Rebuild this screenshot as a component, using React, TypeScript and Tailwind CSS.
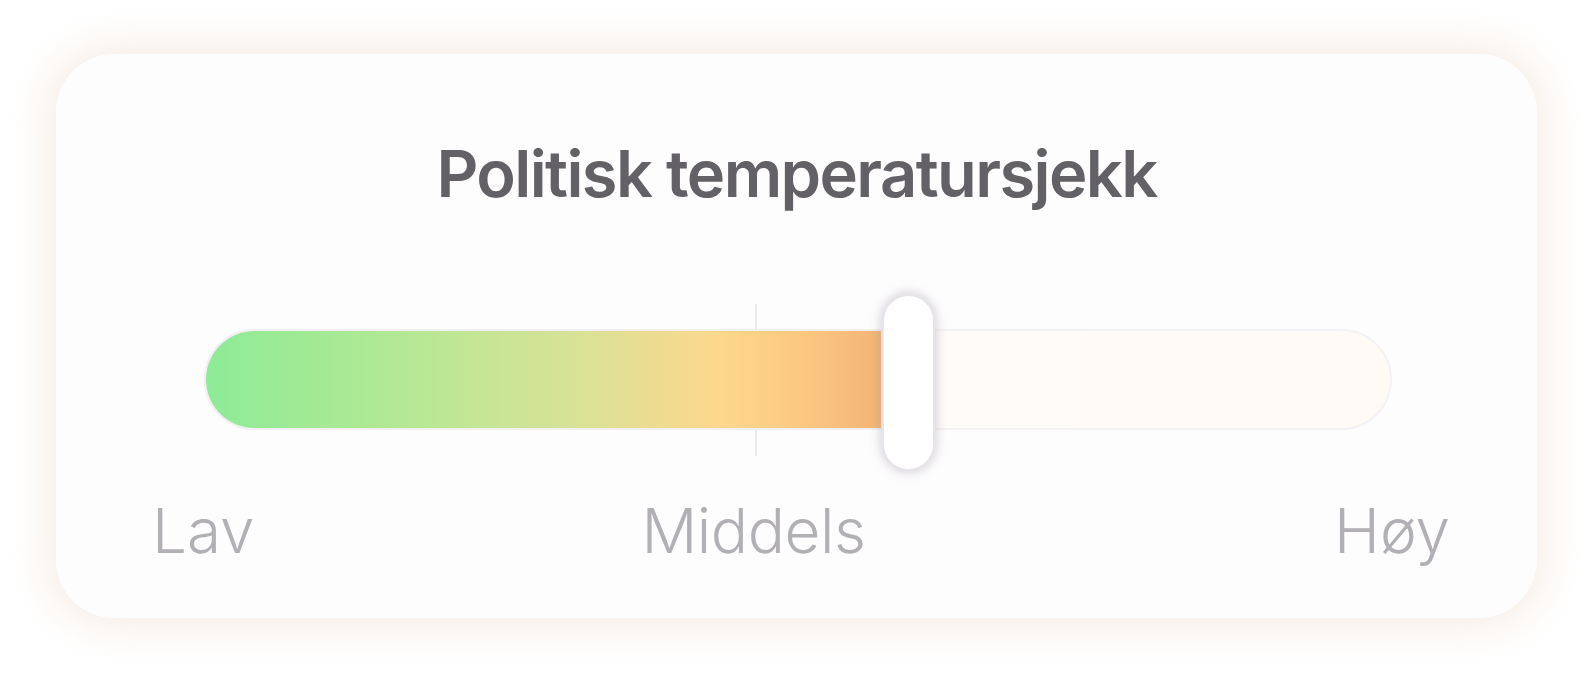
export default function App() {
  const fill = 57;

  return (
    <div className="w-[1593px] h-[673px] bg-white pt-[54px] font-['Inter',sans-serif]">
      <div className="mx-auto w-[1481px] h-[564px] rounded-[58px] bg-[#fefdfe] shadow-[0_0_36px_12px_rgba(246,234,224,0.75)] flex flex-col items-center pt-[87px]">
        <h1 className="text-[65px] leading-none font-semibold tracking-[-1.6px] text-[#636165]">
          Politisk temperatursjekk
        </h1>

        <div className="relative mt-[123px] w-[1188px] h-[101px] ml-[2px]">
          {/* middle tick, sits behind the bar */}
          <div className="absolute left-[551px] top-[-25px] h-[152px] w-[2px] bg-[#ebe9ed]" />
          {/* track */}
          <div className="absolute inset-0 rounded-full border-2 border-[#f3f1f4] bg-[linear-gradient(90deg,#fefdfe_0%,#fefcfc_45%,#fffaf4_100%)]" />
          {/* filled part */}
          <div
            className="absolute top-0 bottom-0 left-0 rounded-l-full bg-[linear-gradient(90deg,#8deb96_0%,#b6e894_30%,#d8e296_55%,#fdd88d_76%,#fbc580_90%,#f3b474_100%)] border-y-2 border-l-2 border-[#f1eff2]"
            style={{ width: `${fill}%` }}
          />
          {/* handle */}
          <div className="absolute left-[678px] top-[-35px] w-[53px] h-[177px] rounded-full bg-white border-2 border-[#e6e4e8] shadow-[0_0_10px_3px_rgba(160,155,165,0.35)]" />
        </div>

        <div className="mt-[70px] w-full flex items-start pl-[96px] pr-[87px] text-[62px] leading-none font-light text-[#b2b0b4]">
          <span>Lav</span>
          <span className="ml-[387px] tracking-[-0.5px]">Middels</span>
          <span className="ml-auto">Høy</span>
        </div>
      </div>
    </div>
  );
}
